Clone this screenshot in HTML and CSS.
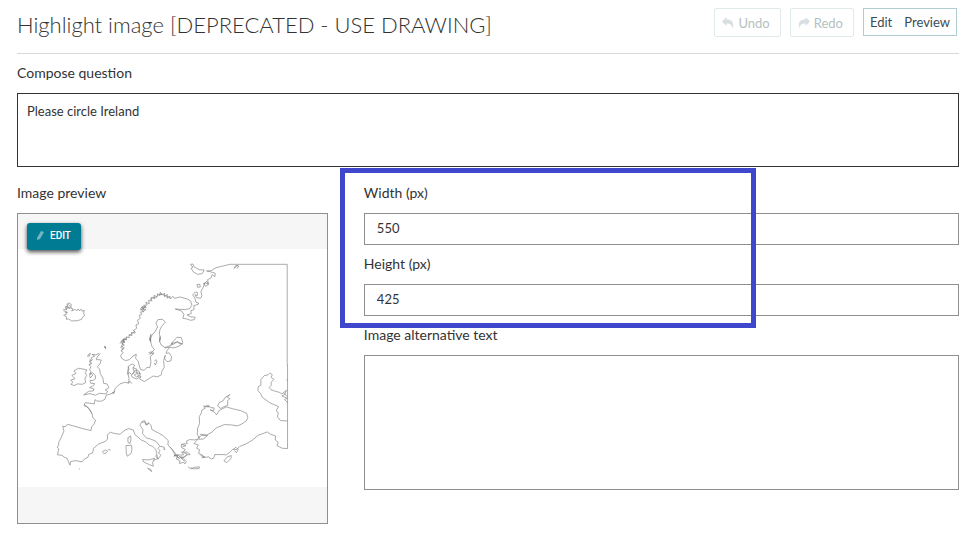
FILE: index.html
```html
<!DOCTYPE html>
<html lang="en">
<head>
  <meta charset="UTF-8">
  <meta name="viewport" content="width=device-width, initial-scale=1.0">
  <title>Highlight image</title>
  <link rel="stylesheet" href="styles.css">
</head>
<body>

  <header class="top-bar">
    <h1>Highlight image [DEPRECATED - USE DRAWING]</h1>
    <div class="actions">
      <button type="button" class="history-btn" disabled>
        <svg width="12" height="12" viewBox="0 0 12 12"><path d="M0 4.500 4.500 0v2.500c5.500 0 8 3 6 9C10 7.500 8 6.500 4.500 6.500V9z"/></svg>
        Undo
      </button>
      <button type="button" class="history-btn" disabled>
        <svg width="12" height="12" viewBox="0 0 12 12"><path d="M12 4.500 7.500 0v2.500c-5.500 0-8 3-6 9C2 7.500 4 6.500 7.500 6.500V9z"/></svg>
        Redo
      </button>
      <div class="mode-switch">
        <button type="button">Edit</button>
        <button type="button">Preview</button>
      </div>
    </div>
  </header>

  <main>
    <label class="field-label" for="question">Compose question</label>
    <textarea id="question" class="question">Please circle Ireland</textarea>

    <div class="columns">
      <section>
        <h2 class="field-label">Image preview</h2>
        <div class="preview">
          <button type="button" class="edit-btn">
            <svg width="7" height="9" viewBox="0 0 7 9"><path d="M4 0 7 1 3 8 0 9V7z"/></svg>
            EDIT
          </button>
          <svg class="map" viewBox="18 249 309 238" role="img" aria-label="Map of Europe">
            <!-- Iceland, Britain and Ireland -->
            <g transform="translate(50 290) scale(.33333)">
              <path d="M40 58 50 60 46 50 54 52 51 42 58 39 64 43 62 52 69 57 65 63 75 58 80 63 84 57 88 62 94 58 97 64 103 61 101 70 104 77 97 82 95 88 83 92 65 93 56 87 49 88 50 81 41 76 50 73 46 68 53 67 40 62M48 48 60 55M53 42 62 50M46 55 66 54"/>
              <path d="M66 256 78 251 72 243 85 235 98 237 111 240 106 248 110 257 105 265 107 278 97 283 82 282 72 287 63 283 69 277 62 271 75 266 69 260z"/>
              <path d="M147 190 138 195 126 193 134 199 124 203 127 210 118 214 125 220 117 224 123 230 119 238 123 246 119 253 128 248 136 256 137 266 130 271 120 272 122 280 134 281 131 287 119 293 132 297 130 303 116 304 101 315 120 311 136 316 149 310 169 312 173 304 166 300 177 293 171 282 161 280 159 265 151 251 149 238 142 230 150 222 154 210 139 209 142 201 151 190"/>
              <path d="M115 194 121 190 119 198 113 199zM119 207 125 212 118 216M118 225 125 219M121 249 129 255 121 264 119 258zM164 170 167 176 165 168z"/>
            </g>
            <!-- Scandinavia and the Arctic coast -->
            <g transform="translate(110 255) scale(.33333)">
              <path d="M30 266 37 257 44 262 40 252 50 255 48 246 58 248 57 239 66 242 64 233 76 234 72 226 80 220 78 210 86 207 83 195 91 190 88 181 95 179 92 171 102 170 91 162 103 164 96 155 109 158 101 151 112 150 107 142 118 146 116 136 126 138 123 128 134 131 132 121 141 126 143 116 150 122 151 112 158 120 164 114 164 126 172 118 171 130 180 123 181 132 189 124 194 130 210 126 232 132 242 138 246 151 239 161 225 164 196 162 215 168 222 178 219 190 230 192 242 196 253 194 256 187 241 185 231 180 244 176 243 167 252 164 252 152 265 148 266 144 258 142 255 129 248 120 256 111 263 113 262 122 255 119 260 128 272 130 276 122 273 110 280 97 285 83 296 88 293 74 303 69 307 59 315 65 316 55 304 51 290 48"/>
              <path d="M33 262 52 247M38 264 42 251 49 254M58 242 74 230 68 225M91 166 108 154 94 158 108 164 98 170M120 134 129 126 137 129 146 119 157 117M150 117 168 122 180 129M280 88 291 79 295 88 287 94 281 84"/>
              <path d="M242 28 249 27 253 36 268 44 283 45 277 56 263 58 251 51 243 40 249 37zM290 48 304 47 318 38 340 33 360 28 532 28 532 332M384 31 372 40 378 31 387 33 381 41M261 89 270 88 271 96 263 97z"/>
              <path d="M122 260 119 254 126 241 136 229 143 216 138 205 144 194 158 193 166 202 157 212 150 224 148 237 152 249 149 260M184 270 190 264 202 261 209 266 219 266"/>
            </g>
            <!-- North Sea, Denmark and the Baltic -->
            <g transform="translate(60 335) scale(.33333)">
              <path d="M183 20 189 13 194 22 185 25 193 30 182 37 190 42 183 47 190 53 182 61 185 70 196 77 209 74 219 63 229 58 227 70 235 79 238 92 242 104 253 106 260 98 270 97 273 81 271 65 281 56 278 50 283 44 276 34 272 20 270 8 272 20"/>
              <path d="M272 20 270 8 273 -2 272 20M299 20 304 30 317 39 330 36 339 39 354 35 367 27 352 20 342 27 326 34 314 38M299 20 300 5 299 20M330 36 322 46 318 55 328 54 335 66 333 78 321 80 314 71 316 61 311 77 313 97 306 108 304 120 291 126 280 123 253 140 239 132 243 124 230 132 216 126 214 118 209 113 203 118 207 102 204 95 217 87 224 91 219 102 224 112 216 118M192 17 185 34 193 39 184 48M266 53 278 50 269 57 282 55M217 118 226 105 238 110 241 121 230 126 223 120 232 115 237 125M218 98 231 103 228 112 243 117M284 79 288 74 291 80 286 90 283 84M133 36 137 40 135 34M332 29 339 24 334 26 351 7 364 8 369 24"/>
              <path d="M206 96 203 110 207 130 207 145 195 142 180 147 166 160 162 173 152 177 139 181 135 193 124 199 110 198 105 194 103 207 90 205 76 203 72 212 84 217 96 236M203 142 211 140 215 146M156 174 164 170 160 177"/>
            </g>
            <!-- Iberia, France and Italy -->
            <g transform="translate(50 395) scale(.33333)">
              <path d="M126 56 119 43 109 34 102 29M126 56 129 69 137 76 132 88 125 96 123 107 98 101 67 92 52 88 47 95 38 94 42 108 34 127 26 143 26 152 21 156 26 161 23 180 36 181 43 187 51 190 60 211 62 200 77 197 96 201 103 193 114 187 116 179 128 174 131 160 145 148 167 139 173 132 172 120 181 112 195 116 210 118 226 105 236 101 250 105 255 119 274 135 289 142 297 150 309 155 317 163 321 175 318 184 324 193 333 181 326 174 330 167 324 160 330 154 343 157 345 164 340 162M330 154 318 139 301 132 289 129 278 116 279 104 270 91 274 83 285 81 287 89 297 85 303 91 306 104 325 114 339 122 355 137 354 150 367 164 375 180 388 189M275 80 284 77 291 91 297 82"/>
              <path d="M234 128 242 123 243 135 240 146 234 142zM228 152 245 151 246 164 243 176 232 184 229 174zM278 194 297 195 314 190 308 202 310 214 298 209 281 201zM293 220 303 224 305 230 298 224zM156 171 166 165 173 169 165 176 158 174M174 164 182 165M87 221 90 223M311 197 323 191 321 180M372 182 385 180 381 187 390 192"/>
            </g>
            <!-- Greece, Turkey, the Black and Caspian seas -->
            <g transform="translate(170 365) scale(.33333)">
              <path d="M0 246 11 259 19 269 12 274 24 271 19 282 30 288 29 296 40 292 45 297 49 290 40 281 32 278 45 276 51 270 61 269 53 262 40 261 46 254 35 248 34 238 52 236 49 229 59 224 74 225 83 223M14 271 41 270 35 261 52 267 42 278 28 275 45 290M36 239 48 242 38 246M54 305 62 312 74 307 89 306 87 311 70 312 62 308"/>
              <path d="M79 228 89 219 82 209 83 190 89 176 88 155 94 145 96 135 106 130 101 123 111 125 116 121 122 128 133 129 131 137 121 135 134 142 140 150 147 137 157 132 169 126 190 132 212 137 230 145 234 158 229 168 216 177 203 183 184 180 163 179 139 189 126 202 111 210 90 208M104 125 118 126 109 120M153 131 143 123 148 113 160 107 165 98 180 89 172 97 180 101 173 108 174 121 160 126zM84 218 95 212 113 212 101 222 87 223z"/>
              <path d="M79 228 72 236 85 240 80 250 89 254 86 266 97 270 101 278 116 276 124 282 131 280 135 269 160 269 169 270 181 261 189 253 200 254 209 245 228 237 247 226 265 211 282 205 292 201 302 208 317 213 316 225 325 232 321 242 337 250 353 251M92 272 105 276 95 279M190 254 197 247 205 253 200 263 193 257M162 288 172 276 184 272 183 281 171 293z"/>
              <path d="M353 0V251M353 168 332 167 323 156 325 142 319 138 326 125 299 113 277 97 272 86 264 77 265 65 273 61 273 44 283 32 294 30 300 24 307 29 304 38 312 43 304 52 304 61 298 68 303 74 316 79 328 82 336 87 350 76 344 89 336 93 352 100 344 104 353 113M341 84 352 94M350 44 353 48"/>
            </g>
          </svg>
        </div>
      </section>

      <section class="settings">
        <label class="field-label" for="width">Width (px)</label>
        <input type="text" id="width" value="550">
        <label class="field-label" for="height">Height (px)</label>
        <input type="text" id="height" value="425">
        <label class="field-label" for="alt-text">Image alternative text</label>
        <textarea id="alt-text" class="alt-text"></textarea>
        <div class="size-marker"></div>
      </section>
    </div>
  </main>

</body>
</html>
```

FILE: styles.css
```css
* {
  box-sizing: border-box;
}
body {
  margin: 0;
  padding: 0 15px 10px 17px;
  background: #fff;
  color: #333;
  font-family: Lato, sans-serif;
  font-size: 13px;
}
button, input, textarea {
  font: inherit;
  color: inherit;
  margin: 0;
}

/* header */
.top-bar {
  display: flex;
  justify-content: space-between;
  align-items: flex-start;
  height: 54px;
  padding: 8px 2px 0 0;
  border-bottom: 1px solid #d5d9d9;
}
h1 {
  margin: 0;
  font-size: 22px;
  font-weight: 300;
  line-height: 34px;
}
.actions {
  display: flex;
  gap: 9px;
}
.history-btn {
  display: flex;
  align-items: center;
  gap: 4px;
  height: 29px;
  padding: 0 10px 0 7px;
  background: #fff;
  border: 1px solid #e0eaea;
  border-radius: 2px;
  color: #b5bfc1;
}
.history-btn svg {
  fill: #d9dfe0;
}
.mode-switch {
  display: flex;
  gap: 12px;
  height: 28px;
  padding: 0 6px;
  border: 1px solid #b0cdd3;
}
.mode-switch button {
  padding: 0;
  background: none;
  border: none;
  color: #3b4d55;
}

/* fields */
.field-label {
  display: block;
  margin: 0;
  height: 39px;
  font-size: 14px;
  font-weight: 400;
  line-height: 38px;
}
input, textarea {
  display: block;
  width: 100%;
  background: #fff;
  border: 1px solid #8f8f8f;
  border-radius: 0;
  resize: none;
}
input {
  height: 32px;
  padding: 0 12px 2px;
}
.question {
  height: 74px;
  padding: 8px 9px;
  border-color: #333;
  line-height: 18px;
}
.alt-text {
  height: 135px;
  padding: 8px 12px;
}
.columns {
  display: grid;
  grid-template-columns: 33% 1fr;
  gap: 36px;
  padding-top: 7px;
}

/* image preview */
.preview {
  position: relative;
  display: flex;
  align-items: center;
  aspect-ratio: 1;
  background: #f6f6f6;
  border: 1px solid #8f8f8f;
}
.map {
  width: 100%;
  background: #fff;
  fill: none;
  stroke: #808080;
  stroke-width: 2;
}
.edit-btn {
  position: absolute;
  top: 9px;
  left: 9px;
  display: flex;
  align-items: center;
  gap: 6px;
  height: 27px;
  padding: 0 10px 2px;
  background: #007b94;
  border: none;
  border-radius: 3px;
  box-shadow: 0 2px 4px rgba(0, 0, 0, .7);
  color: #fff;
  font-family: Roboto, sans-serif;
  font-size: 10px;
  font-weight: 500;
}
.edit-btn svg {
  fill: #72b6c4;
}

/* box drawn round the size fields */
.settings {
  position: relative;
}
.size-marker {
  position: absolute;
  top: -6px;
  left: -24px;
  width: 70%;
  height: 160px;
  border: 5px solid #3f48cc;
  pointer-events: none;
}
```
